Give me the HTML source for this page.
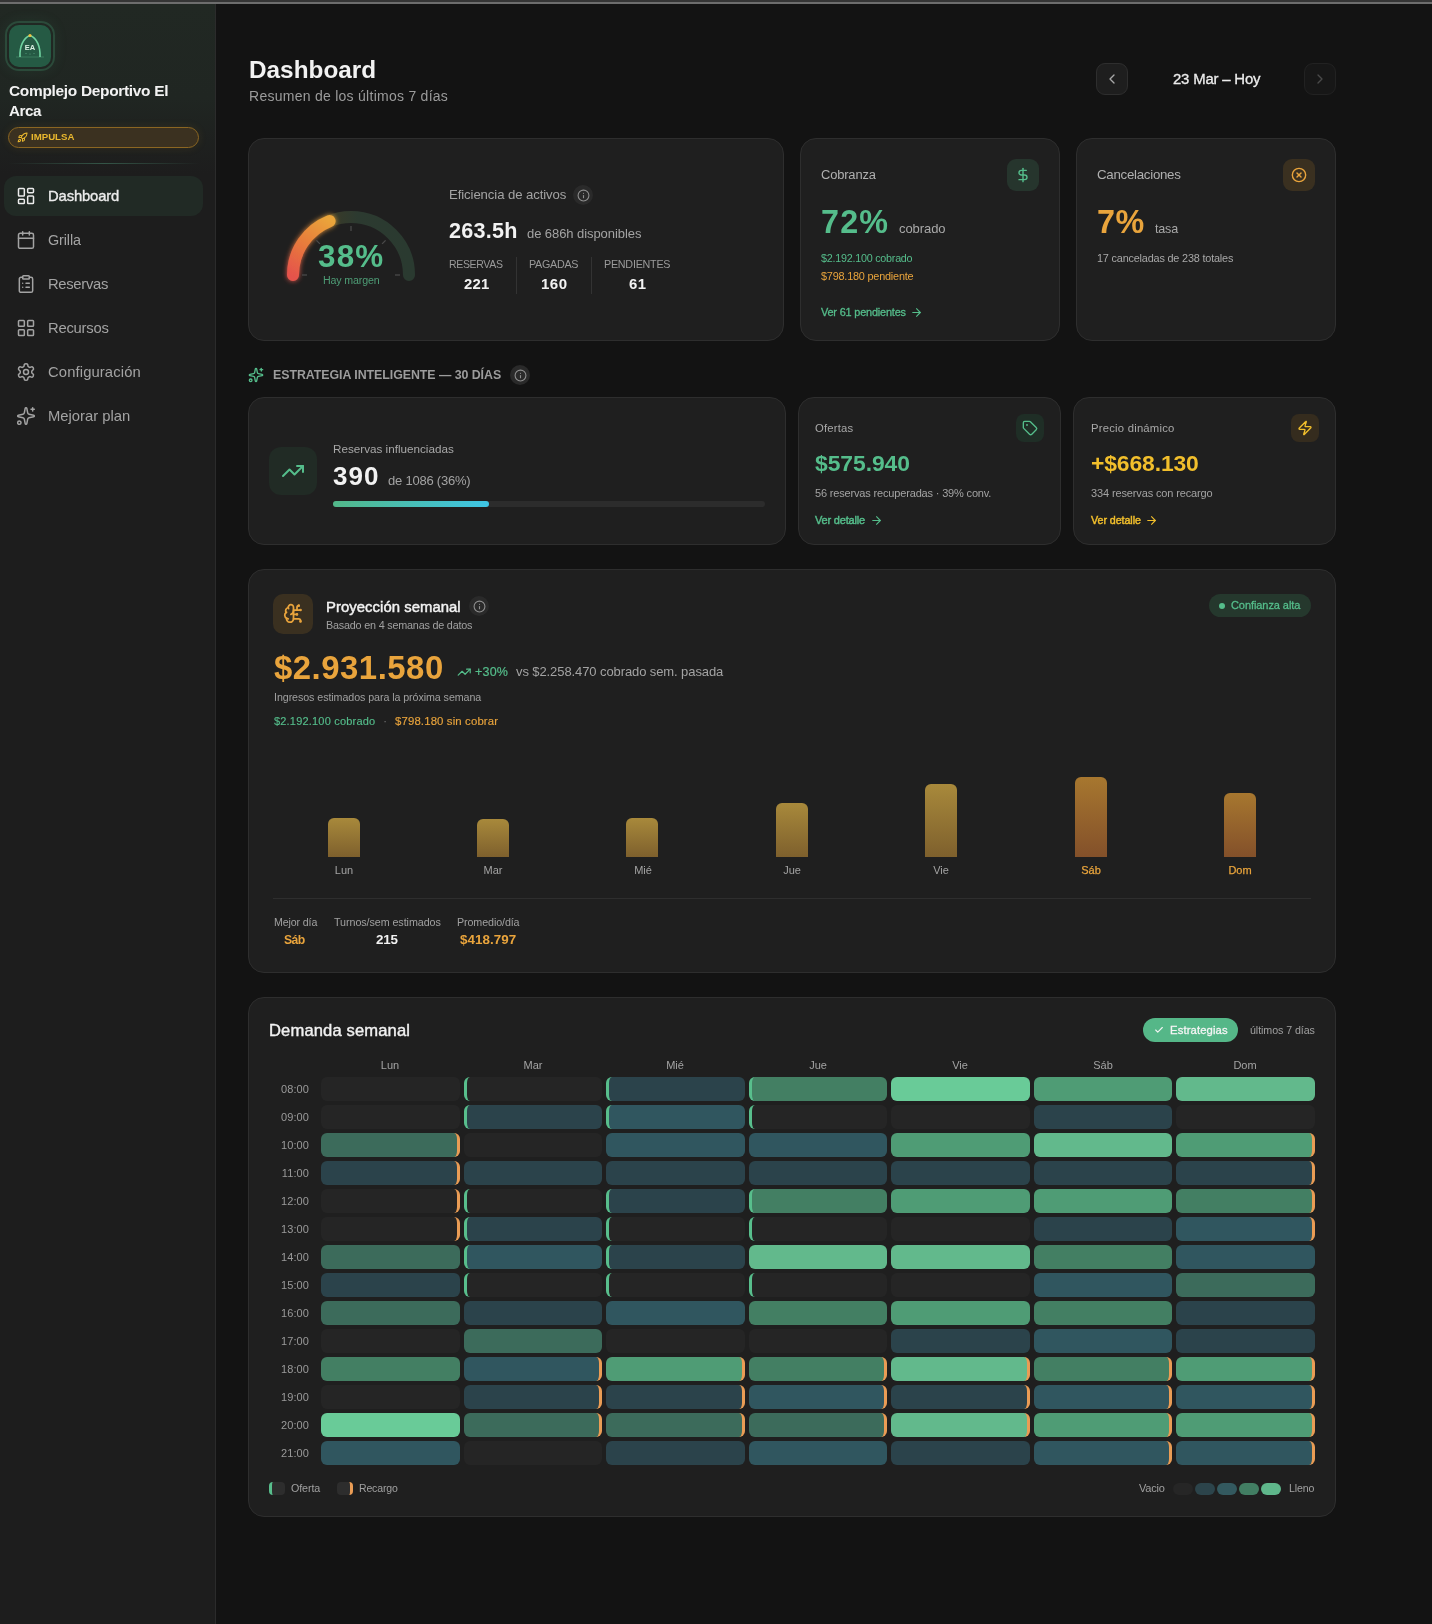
<!DOCTYPE html>
<html><head><meta charset="utf-8"><title>Dashboard</title>
<style>
html,body{margin:0;padding:0;}
body{width:1432px;height:1624px;background:#131313;position:relative;overflow:hidden;font-family:"Liberation Sans", sans-serif;}
.t{position:absolute;white-space:nowrap;-webkit-font-smoothing:antialiased;}
body>div.t{will-change:transform;}
.b{position:absolute;}
.ic{position:absolute;overflow:visible;}
</style></head><body>
<div class="b" style="left:0px;top:0px;width:1432px;height:2px;background:#353535;"></div>
<div class="b" style="left:0px;top:2px;width:1432px;height:2px;background:#6d6d6d;"></div>
<div class="b" style="left:0px;top:4px;width:215px;height:1620px;background:#1d1d1d;"></div>
<div class="b" style="left:0px;top:4px;width:215px;height:170px;background:linear-gradient(180deg,#212823 0%,#202622 55%,#1d1d1d 100%);"></div>
<div class="b" style="left:215px;top:4px;width:1px;height:1620px;background:#2b2b2b;"></div>
<div class="b" style="left:8px;top:163px;width:192px;height:1px;background:linear-gradient(90deg,rgba(60,110,90,0) 0%,rgba(70,130,105,.55) 50%,rgba(60,110,90,0) 100%);"></div>
<div class="b" style="left:5px;top:21px;width:50px;height:50px;border:2px solid #2b4a3a;border-radius:14px;box-sizing:border-box;box-shadow:0 0 14px rgba(70,170,120,.10);"></div>
<div class="b" style="left:9px;top:25px;width:42px;height:42px;background:#255a44;border-radius:10px;"></div>
<svg class="ic" style="left:9px;top:25px;will-change:transform" width="42" height="42" viewBox="0 0 42 42">
<line x1="7" y1="32" x2="35" y2="32" stroke="#3a7a5c" stroke-width="1"/>
<path d="M11 32 C10.5 22 14 13 21 10.5 C28 13 31.5 22 31 32" fill="none" stroke="#6fd3a0" stroke-width="1.6"/>
<circle cx="21" cy="10.5" r="1.6" fill="#f0c040"/>
<text x="21" y="25" text-anchor="middle" font-family="Liberation Sans" font-weight="700" font-size="7.5" fill="#d9efe2">EA</text>
<circle cx="17" cy="28.5" r=".5" fill="#5fae88"/><circle cx="21" cy="29" r=".5" fill="#5fae88"/><circle cx="25" cy="28.5" r=".5" fill="#5fae88"/>
</svg>
<div class="t" style="left:8.8px;top:83.00px;font-size:15.46px;line-height:15.46px;color:#f2f2f2;font-weight:700;letter-spacing:-0.312px;">Complejo Deportivo El</div>
<div class="t" style="left:8.8px;top:103.00px;font-size:15.24px;line-height:15.24px;color:#f2f2f2;font-weight:700;letter-spacing:-0.5px;">Arca</div>
<div class="b" style="left:8px;top:127px;width:191px;height:21px;background:#3b3120;border:1px solid #8b6622;border-radius:11px;box-sizing:border-box;box-shadow:0 0 10px rgba(200,150,40,.12);"></div>
<svg class="ic" style="left:17px;top:131.5px;" width="11" height="11" viewBox="0 0 24 24" fill="none" stroke="#e9b72e" stroke-width="2.2" stroke-linecap="round" stroke-linejoin="round"><path d="M4.5 16.5c-1.5 1.26-2 5-2 5s3.74-.5 5-2c.71-.84.7-2.13-.09-2.91a2.18 2.18 0 0 0-2.91-.09z"/><path d="m12 15-3-3a22 22 0 0 1 2-3.950A12.88 12.88 0 0 1 22 2c0 2.720-.78 7.5-6 11a22.35 22.35 0 0 1-4 2z"/><path d="M9 12H4s.55-3.03 2-4c1.62-1.08 5 0 5 0"/><path d="M12 15v5s3.03-.55 4-2c1.08-1.62 0-5 0-5"/></svg>
<div class="t" style="left:30.8px;top:132.00px;font-size:9.7px;line-height:9.7px;color:#e9b72e;font-weight:700;letter-spacing:-0.025px;">IMPULSA</div>
<div class="b" style="left:4px;top:176px;width:199px;height:40px;background:#212a25;border-radius:12px;"></div>
<svg class="ic" style="left:16px;top:186px;" width="20" height="20" viewBox="0 0 24 24" fill="none" stroke="#ececec" stroke-width="1.8" stroke-linecap="round" stroke-linejoin="round"><rect width="7" height="9" x="3" y="3" rx="1"/><rect width="7" height="5" x="14" y="3" rx="1"/><rect width="7" height="9" x="14" y="12" rx="1"/><rect width="7" height="5" x="3" y="16" rx="1"/></svg>
<div class="t" style="left:48.3px;top:189.00px;font-size:14.8px;line-height:14.8px;color:#ececec;font-weight:400;letter-spacing:-0.131px;-webkit-text-stroke:0.35px #ececec;">Dashboard</div>
<svg class="ic" style="left:16px;top:230px;" width="20" height="20" viewBox="0 0 24 24" fill="none" stroke="#a3a3a3" stroke-width="1.8" stroke-linecap="round" stroke-linejoin="round"><path d="M8 2v4"/><path d="M16 2v4"/><rect width="18" height="18" x="3" y="4" rx="2"/><path d="M3 10h18"/></svg>
<div class="t" style="left:48.3px;top:233.00px;font-size:14.42px;line-height:14.42px;color:#a3a3a3;font-weight:400;letter-spacing:-0.11px;">Grilla</div>
<svg class="ic" style="left:16px;top:274px;" width="20" height="20" viewBox="0 0 24 24" fill="none" stroke="#a3a3a3" stroke-width="1.8" stroke-linecap="round" stroke-linejoin="round"><rect width="8" height="4" x="8" y="2" rx="1" ry="1"/><path d="M16 4h2a2 2 0 0 1 2 2v14a2 2 0 0 1-2 2H6a2 2 0 0 1-2-2V6a2 2 0 0 1 2-2h2"/><path d="M12 11h4"/><path d="M12 16h4"/><path d="M8 11h.01"/><path d="M8 16h.01"/></svg>
<div class="t" style="left:48.3px;top:277.00px;font-size:14.8px;line-height:14.8px;color:#a3a3a3;font-weight:400;letter-spacing:-0.314px;">Reservas</div>
<svg class="ic" style="left:16px;top:318px;" width="20" height="20" viewBox="0 0 24 24" fill="none" stroke="#a3a3a3" stroke-width="1.8" stroke-linecap="round" stroke-linejoin="round"><rect width="7" height="7" x="3" y="3" rx="1"/><rect width="7" height="7" x="14" y="3" rx="1"/><rect width="7" height="7" x="14" y="14" rx="1"/><rect width="7" height="7" x="3" y="14" rx="1"/></svg>
<div class="t" style="left:48.3px;top:321.00px;font-size:14.8px;line-height:14.8px;color:#a3a3a3;font-weight:400;letter-spacing:-0.243px;">Recursos</div>
<svg class="ic" style="left:16px;top:362px;" width="20" height="20" viewBox="0 0 24 24" fill="none" stroke="#a3a3a3" stroke-width="1.8" stroke-linecap="round" stroke-linejoin="round"><path d="M12.22 2h-.44a2 2 0 0 0-2 2v.18a2 2 0 0 1-1 1.73l-.43.25a2 2 0 0 1-2 0l-.15-.08a2 2 0 0 0-2.73.73l-.22.38a2 2 0 0 0 .73 2.73l.15.1a2 2 0 0 1 1 1.72v.51a2 2 0 0 1-1 1.74l-.15.09a2 2 0 0 0-.73 2.73l.22.38a2 2 0 0 0 2.73.73l.15-.08a2 2 0 0 1 2 0l.43.25a2 2 0 0 1 1 1.73V20a2 2 0 0 0 2 2h.44a2 2 0 0 0 2-2v-.18a2 2 0 0 1 1-1.73l.43-.25a2 2 0 0 1 2 0l.15.08a2 2 0 0 0 2.73-.73l.22-.39a2 2 0 0 0-.73-2.730l-.15-.08a2 2 0 0 1-1-1.74v-.5a2 2 0 0 1 1-1.74l.15-.09a2 2 0 0 0 .73-2.73l-.22-.38a2 2 0 0 0-2.73-.73l-.15.08a2 2 0 0 1-2 0l-.43-.25a2 2 0 0 1-1-1.73V4a2 2 0 0 0-2-2z"/><circle cx="12" cy="12" r="3"/></svg>
<div class="t" style="left:48.3px;top:365.00px;font-size:14.8px;line-height:14.8px;color:#a3a3a3;font-weight:400;letter-spacing:0.117px;">Configuración</div>
<svg class="ic" style="left:16px;top:406px;" width="20" height="20" viewBox="0 0 24 24" fill="none" stroke="#a3a3a3" stroke-width="1.8" stroke-linecap="round" stroke-linejoin="round"><path d="M11.017 2.814a1 1 0 0 1 1.966 0l1.051 5.558a2 2 0 0 0 1.594 1.594l5.558 1.051a1 1 0 0 1 0 1.966l-5.558 1.051a2 2 0 0 0-1.594 1.594l-1.051 5.558a1 1 0 0 1-1.966 0l-1.051-5.558a2 2 0 0 0-1.594-1.594l-5.558-1.051a1 1 0 0 1 0-1.966l5.558-1.051a2 2 0 0 0 1.594-1.594z"/><path d="M20 2v4"/><path d="M22 4h-4"/><circle cx="4" cy="20" r="2"/></svg>
<div class="t" style="left:48.3px;top:409.00px;font-size:14.8px;line-height:14.8px;color:#a3a3a3;font-weight:400;letter-spacing:-0.005px;">Mejorar plan</div>
<div class="t" style="left:248.9px;top:58.00px;font-size:24.3px;line-height:24.3px;color:#f2f2f2;font-weight:700;letter-spacing:0.025px;">Dashboard</div>
<div class="t" style="left:248.5px;top:89.00px;font-size:14px;line-height:14px;color:#9b9b9b;font-weight:400;letter-spacing:0.266px;">Resumen de los últimos 7 días</div>
<div class="b" style="left:1096px;top:63px;width:32px;height:32px;background:#1e1e1e;border:1px solid #2e2e2e;border-radius:9px;box-sizing:border-box;"></div>
<svg class="ic" style="left:1104px;top:71px;" width="16" height="16" viewBox="0 0 24 24" fill="none" stroke="#a8a8a8" stroke-width="2" stroke-linecap="round" stroke-linejoin="round"><path d="m15 18-6-6 6-6"/></svg>
<div class="t" style="left:1172.5px;top:72.00px;font-size:14.93px;line-height:14.93px;color:#ececec;font-weight:400;letter-spacing:-0.186px;-webkit-text-stroke:0.3px #ececec;">23 Mar – Hoy</div>
<div class="b" style="left:1304px;top:63px;width:32px;height:32px;background:#171717;border:1px solid #222;border-radius:9px;box-sizing:border-box;"></div>
<svg class="ic" style="left:1312px;top:71px;" width="16" height="16" viewBox="0 0 24 24" fill="none" stroke="#4a4a4a" stroke-width="2" stroke-linecap="round" stroke-linejoin="round"><path d="m9 18 6-6-6-6"/></svg>
<div class="b" style="left:248px;top:138px;width:536px;height:203px;background:#1f1f1f;border:1px solid #2e2e2e;border-radius:16px;box-sizing:border-box;"></div>
<div class="b" style="left:800px;top:138px;width:260px;height:203px;background:#1f1f1f;border:1px solid #2e2e2e;border-radius:16px;box-sizing:border-box;"></div>
<div class="b" style="left:1076px;top:138px;width:260px;height:203px;background:#1f1f1f;border:1px solid #2e2e2e;border-radius:16px;box-sizing:border-box;"></div>
<svg class="ic" style="left:268px;top:195px" width="166" height="105" viewBox="268 195 166 105">
<defs>
<linearGradient id="gtr" x1="330" y1="0" x2="409" y2="0" gradientUnits="userSpaceOnUse"><stop offset="0" stop-color="#3a3a28"/><stop offset=".35" stop-color="#2c3a30"/><stop offset="1" stop-color="#2a3a30"/></linearGradient>
<linearGradient id="gac" x1="293" y1="276" x2="330" y2="220" gradientUnits="userSpaceOnUse"><stop offset="0" stop-color="#e5534b"/><stop offset=".55" stop-color="#e8803a"/><stop offset="1" stop-color="#eaa53a"/></linearGradient>
<filter id="glow" x="-30%" y="-30%" width="160%" height="160%"><feGaussianBlur stdDeviation="2.5" result="b"/><feMerge><feMergeNode in="b"/><feMergeNode in="SourceGraphic"/></feMerge></filter>
</defs>
<path d="M293 275 A58 58 0 0 1 409 275" fill="none" stroke="url(#gtr)" stroke-width="12" stroke-linecap="round"/>
<path d="M293 275 A58 58 0 0 1 329.6 221.1" fill="none" stroke="url(#gac)" stroke-width="12" stroke-linecap="round" filter="url(#glow)"/>
<g stroke="#4a4a4a" stroke-width="1.3">
<line x1="302" y1="275" x2="307" y2="275"/><line x1="395" y1="275" x2="400" y2="275"/>
<line x1="351" y1="226" x2="351" y2="231"/>
<line x1="316.4" y1="240.4" x2="319.9" y2="243.9"/><line x1="385.6" y1="240.4" x2="382.1" y2="243.9"/>
</g>
</svg>
<div class="t" style="left:317.8px;top:241.00px;font-size:31.4px;line-height:31.4px;color:#55bd8b;font-weight:700;letter-spacing:1.225px;">38%</div>
<div class="t" style="left:322.5px;top:275.00px;font-size:10.65px;line-height:10.65px;color:#4e9d76;font-weight:400;letter-spacing:-0.133px;">Hay margen</div>
<div class="t" style="left:449.2px;top:188.00px;font-size:13.17px;line-height:13.17px;color:#a3a3a3;font-weight:400;letter-spacing:-0.093px;">Eficiencia de activos</div>
<div class="b" style="left:573px;top:185px;width:20px;height:20px;background:#2a2a2a;border-radius:50%;"></div>
<svg class="ic" style="left:576.5px;top:188.5px;" width="13" height="13" viewBox="0 0 24 24" fill="none" stroke="#8f8f8f" stroke-width="2" stroke-linecap="round" stroke-linejoin="round"><circle cx="12" cy="12" r="10"/><path d="M12 16v-4"/><path d="M12 8h.01"/></svg>
<div class="t" style="left:449.0px;top:220.00px;font-size:21.57px;line-height:21.57px;color:#f2f2f2;font-weight:700;letter-spacing:0.26px;">263.5h</div>
<div class="t" style="left:526.6px;top:227.00px;font-size:13px;line-height:13px;color:#a3a3a3;font-weight:400;letter-spacing:-0.069px;">de 686h disponibles</div>
<div class="t" style="left:449.0px;top:259.00px;font-size:10.53px;line-height:10.53px;color:#9a9a9a;font-weight:400;letter-spacing:-0.343px;">RESERVAS</div>
<div class="t" style="left:463.5px;top:277.00px;font-size:14.85px;line-height:14.85px;color:#f2f2f2;font-weight:700;letter-spacing:0.3px;">221</div>
<div class="b" style="left:516px;top:257px;width:1px;height:37px;background:#333;"></div>
<div class="t" style="left:528.8px;top:259.00px;font-size:10.75px;line-height:10.75px;color:#9a9a9a;font-weight:400;letter-spacing:-0.283px;">PAGADAS</div>
<div class="t" style="left:541.0px;top:276.00px;font-size:15.06px;line-height:15.06px;color:#f2f2f2;font-weight:700;letter-spacing:0.45px;">160</div>
<div class="b" style="left:591px;top:257px;width:1px;height:37px;background:#333;"></div>
<div class="t" style="left:603.9px;top:259.00px;font-size:10.76px;line-height:10.76px;color:#9a9a9a;font-weight:400;letter-spacing:-0.244px;">PENDIENTES</div>
<div class="t" style="left:628.5px;top:277.00px;font-size:14.89px;line-height:14.89px;color:#f2f2f2;font-weight:700;letter-spacing:0.5px;">61</div>
<div class="t" style="left:821.4px;top:169.00px;font-size:12.92px;line-height:12.92px;color:#b0b0b0;font-weight:400;letter-spacing:-0.15px;">Cobranza</div>
<div class="b" style="left:1007px;top:159px;width:32px;height:32px;background:#26352d;border-radius:9px;"></div>
<svg class="ic" style="left:1015px;top:167px;" width="16" height="16" viewBox="0 0 24 24" fill="none" stroke="#55bd8b" stroke-width="2.1" stroke-linecap="round" stroke-linejoin="round"><line x1="12" x2="12" y1="2" y2="22"/><path d="M17 5H9.5a3.5 3.5 0 0 0 0 7h5a3.5 3.5 0 0 1 0 7H6"/></svg>
<div class="t" style="left:821.0px;top:206.00px;font-size:32.3px;line-height:32.3px;color:#55bd8b;font-weight:700;letter-spacing:1.175px;">72%</div>
<div class="t" style="left:898.6px;top:222.00px;font-size:13px;line-height:13px;color:#a8a8a8;font-weight:400;letter-spacing:-0.067px;">cobrado</div>
<div class="t" style="left:821.0px;top:253.00px;font-size:10.76px;line-height:10.76px;color:#55bd8b;font-weight:400;letter-spacing:-0.238px;">$2.192.100 cobrado</div>
<div class="t" style="left:821.0px;top:271.00px;font-size:10.86px;line-height:10.86px;color:#e9a43c;font-weight:400;letter-spacing:-0.203px;">$798.180 pendiente</div>
<div class="t" style="left:821.0px;top:307.00px;font-size:10.91px;line-height:10.91px;color:#55bd8b;font-weight:400;letter-spacing:-0.184px;-webkit-text-stroke:0.3px #55bd8b;">Ver 61 pendientes</div>
<svg class="ic" style="left:909.5px;top:305.5px;" width="13" height="13" viewBox="0 0 24 24" fill="none" stroke="#55bd8b" stroke-width="2" stroke-linecap="round" stroke-linejoin="round"><path d="M5 12h14"/><path d="m12 5 7 7-7 7"/></svg>
<div class="t" style="left:1097.4px;top:168.00px;font-size:13.3px;line-height:13.3px;color:#b0b0b0;font-weight:400;letter-spacing:-0.279px;">Cancelaciones</div>
<div class="b" style="left:1283px;top:159px;width:32px;height:32px;background:#3a3020;border-radius:9px;"></div>
<svg class="ic" style="left:1291px;top:167px;" width="16" height="16" viewBox="0 0 24 24" fill="none" stroke="#e9a43c" stroke-width="2.1" stroke-linecap="round" stroke-linejoin="round"><circle cx="12" cy="12" r="10"/><path d="m15 9-6 6"/><path d="m9 9 6 6"/></svg>
<div class="t" style="left:1097.4px;top:206.00px;font-size:32.3px;line-height:32.3px;color:#e9a43c;font-weight:700;letter-spacing:0.5px;">7%</div>
<div class="t" style="left:1155.0px;top:223.00px;font-size:12.55px;line-height:12.55px;color:#a8a8a8;font-weight:400;letter-spacing:-0.183px;">tasa</div>
<div class="t" style="left:1097.4px;top:253.00px;font-size:10.87px;line-height:10.87px;color:#a8a8a8;font-weight:400;letter-spacing:-0.183px;">17 canceladas de 238 totales</div>
<svg class="ic" style="left:248px;top:367px;" width="16" height="16" viewBox="0 0 24 24" fill="none" stroke="#55bd8b" stroke-width="2" stroke-linecap="round" stroke-linejoin="round"><path d="M11.017 2.814a1 1 0 0 1 1.966 0l1.051 5.558a2 2 0 0 0 1.594 1.594l5.558 1.051a1 1 0 0 1 0 1.966l-5.558 1.051a2 2 0 0 0-1.594 1.594l-1.051 5.558a1 1 0 0 1-1.966 0l-1.051-5.558a2 2 0 0 0-1.594-1.594l-5.558-1.051a1 1 0 0 1 0-1.966l5.558-1.051a2 2 0 0 0 1.594-1.594z"/><path d="M20 2v4"/><path d="M22 4h-4"/><circle cx="4" cy="20" r="2"/></svg>
<div class="t" style="left:272.5px;top:369.00px;font-size:12.4px;line-height:12.4px;color:#9c9c9c;font-weight:700;letter-spacing:-0.058px;">ESTRATEGIA INTELIGENTE — 30 DÍAS</div>
<div class="b" style="left:510px;top:365px;width:20px;height:20px;background:#2a2a2a;border-radius:50%;"></div>
<svg class="ic" style="left:513.5px;top:368.5px;" width="13" height="13" viewBox="0 0 24 24" fill="none" stroke="#8f8f8f" stroke-width="2" stroke-linecap="round" stroke-linejoin="round"><circle cx="12" cy="12" r="10"/><path d="M12 16v-4"/><path d="M12 8h.01"/></svg>
<div class="b" style="left:248px;top:397px;width:538px;height:148px;background:#1f1f1f;border:1px solid #2e2e2e;border-radius:16px;box-sizing:border-box;"></div>
<div class="b" style="left:798px;top:397px;width:263px;height:148px;background:#1f1f1f;border:1px solid #2e2e2e;border-radius:16px;box-sizing:border-box;"></div>
<div class="b" style="left:1073px;top:397px;width:263px;height:148px;background:#1f1f1f;border:1px solid #2e2e2e;border-radius:16px;box-sizing:border-box;"></div>
<div class="b" style="left:269px;top:447px;width:48px;height:48px;background:#212b25;border-radius:12px;"></div>
<svg class="ic" style="left:281px;top:459px;" width="24" height="24" viewBox="0 0 24 24" fill="none" stroke="#55bd8b" stroke-width="2" stroke-linecap="round" stroke-linejoin="round"><path d="M16 7h6v6"/><path d="m22 7-8.5 8.5-5-5L2 17"/></svg>
<div class="t" style="left:333.4px;top:443.00px;font-size:11.7px;line-height:11.7px;color:#a8a8a8;font-weight:400;letter-spacing:-0.002px;">Reservas influenciadas</div>
<div class="t" style="left:333.4px;top:463.00px;font-size:26.0px;line-height:26.0px;color:#f2f2f2;font-weight:700;letter-spacing:1.0px;">390</div>
<div class="t" style="left:387.6px;top:474.00px;font-size:13px;line-height:13px;color:#a3a3a3;font-weight:400;letter-spacing:-0.217px;">de 1086 (36%)</div>
<div class="b" style="left:333px;top:501px;width:432px;height:6px;background:#2c2c2c;border-radius:3px;"></div>
<div class="b" style="left:333px;top:501px;width:156px;height:6px;background:linear-gradient(90deg,#52b788,#3ec6e6);border-radius:3px;"></div>
<div class="t" style="left:815.4px;top:423.00px;font-size:11.3px;line-height:11.3px;color:#a8a8a8;font-weight:400;letter-spacing:0.192px;">Ofertas</div>
<div class="b" style="left:1016px;top:414px;width:28px;height:28px;background:#1f2e26;border-radius:8px;"></div>
<svg class="ic" style="left:1022.3px;top:420.3px;" width="16" height="16" viewBox="0 0 24 24" fill="none" stroke="#55bd8b" stroke-width="2" stroke-linecap="round" stroke-linejoin="round"><path d="M12.586 2.586A2 2 0 0 0 11.172 2H4a2 2 0 0 0-2 2v7.172a2 2 0 0 0 .586 1.414l8.704 8.704a2.426 2.426 0 0 0 3.42 0l6.58-6.58a2.426 2.426 0 0 0 0-3.42z"/><circle cx="7.5" cy="7.5" r=".5" fill="currentColor"/></svg>
<div class="t" style="left:815.4px;top:452.00px;font-size:22.9px;line-height:22.9px;color:#55bd8b;font-weight:700;letter-spacing:-0.071px;">$575.940</div>
<div class="t" style="left:815.4px;top:488.00px;font-size:11px;line-height:11px;color:#a3a3a3;font-weight:400;letter-spacing:-0.165px;">56 reservas recuperadas · 39% conv.</div>
<div class="t" style="left:815.4px;top:515.00px;font-size:11px;line-height:11px;color:#55bd8b;font-weight:400;letter-spacing:-0.185px;-webkit-text-stroke:0.45px #55bd8b;">Ver detalle</div>
<svg class="ic" style="left:869.6px;top:514.2px;" width="13" height="13" viewBox="0 0 24 24" fill="none" stroke="#55bd8b" stroke-width="2" stroke-linecap="round" stroke-linejoin="round"><path d="M5 12h14"/><path d="m12 5 7 7-7 7"/></svg>
<div class="t" style="left:1090.5px;top:423.00px;font-size:11.3px;line-height:11.3px;color:#a8a8a8;font-weight:400;letter-spacing:0.214px;">Precio dinámico</div>
<div class="b" style="left:1291px;top:414px;width:28px;height:28px;background:#352c1e;border-radius:8px;"></div>
<svg class="ic" style="left:1297px;top:420.3px;" width="16" height="16" viewBox="0 0 24 24" fill="none" stroke="#f2bf2c" stroke-width="2" stroke-linecap="round" stroke-linejoin="round"><path d="M4 14a1 1 0 0 1-.78-1.63l9.9-10.2a.5.5 0 0 1 .86.46l-1.92 6.02A1 1 0 0 0 13 10h7a1 1 0 0 1 .78 1.63l-9.9 10.2a.5.5 0 0 1-.86-.46l1.92-6.02A1 1 0 0 0 11 14z"/></svg>
<div class="t" style="left:1090.5px;top:452.00px;font-size:22.9px;line-height:22.9px;color:#f2bf2c;font-weight:700;letter-spacing:-0.125px;">+$668.130</div>
<div class="t" style="left:1090.5px;top:488.00px;font-size:11px;line-height:11px;color:#a3a3a3;font-weight:400;letter-spacing:-0.133px;">334 reservas con recargo</div>
<div class="t" style="left:1090.5px;top:515.00px;font-size:10.72px;line-height:10.72px;color:#f2bf2c;font-weight:400;letter-spacing:-0.07px;-webkit-text-stroke:0.45px #f2bf2c;">Ver detalle</div>
<svg class="ic" style="left:1144.7px;top:514.4px;" width="13" height="13" viewBox="0 0 24 24" fill="none" stroke="#f2bf2c" stroke-width="2" stroke-linecap="round" stroke-linejoin="round"><path d="M5 12h14"/><path d="m12 5 7 7-7 7"/></svg>
<div class="b" style="left:248px;top:569px;width:1088px;height:404px;background:#1f1f1f;border:1px solid #2e2e2e;border-radius:16px;box-sizing:border-box;"></div>
<div class="b" style="left:273px;top:594px;width:40px;height:40px;background:#3a3020;border-radius:10px;"></div>
<svg class="ic" style="left:282.7px;top:602.9px;" width="21" height="21" viewBox="0 0 24 24" fill="none" stroke="#e9a43c" stroke-width="2" stroke-linecap="round" stroke-linejoin="round"><path d="M12 5a3 3 0 1 0-5.997.125 4 4 0 0 0-2.526 5.77 4 4 0 0 0 .556 6.588A4 4 0 1 0 12 18Z"/><path d="M9 13a4.5 4.5 0 0 0 3-4"/><path d="M6.003 5.125A3 3 0 0 0 6.401 6.5"/><path d="M3.477 10.896a4 4 0 0 1 .585-.396"/><path d="M6 18a4 4 0 0 1-1.967-.516"/><path d="M12 13h4"/><path d="M12 18h6a2 2 0 0 1 2 2v1"/><path d="M12 8h8"/><path d="M16 8V5a2 2 0 0 1 2-2"/><circle cx="16" cy="13" r=".5"/><circle cx="18" cy="3" r=".5"/><circle cx="20" cy="21" r=".5"/><circle cx="20" cy="8" r=".5"/></svg>
<div class="t" style="left:325.5px;top:600.00px;font-size:14.9px;line-height:14.9px;color:#f2f2f2;font-weight:400;letter-spacing:0.035px;-webkit-text-stroke:0.45px #f2f2f2;">Proyección semanal</div>
<div class="b" style="left:469px;top:596px;width:20px;height:20px;background:#2a2a2a;border-radius:50%;"></div>
<svg class="ic" style="left:472.5px;top:599.5px;" width="13" height="13" viewBox="0 0 24 24" fill="none" stroke="#8f8f8f" stroke-width="2" stroke-linecap="round" stroke-linejoin="round"><circle cx="12" cy="12" r="10"/><path d="M12 16v-4"/><path d="M12 8h.01"/></svg>
<div class="t" style="left:325.5px;top:620.00px;font-size:10.8px;line-height:10.8px;color:#a0a0a0;font-weight:400;letter-spacing:-0.2px;">Basado en 4 semanas de datos</div>
<div class="b" style="left:1209px;top:594px;width:102px;height:23px;background:#25382d;border-radius:12px;"></div>
<div class="b" style="left:1219px;top:602.5px;width:6px;height:6px;background:#55bd8b;border-radius:50%;"></div>
<div class="t" style="left:1231.0px;top:600.00px;font-size:11px;line-height:11px;color:#55bd8b;font-weight:400;letter-spacing:-0.073px;-webkit-text-stroke:0.3px #55bd8b;">Confianza alta</div>
<div class="t" style="left:273.7px;top:652.00px;font-size:32.9px;line-height:32.9px;color:#e9a43c;font-weight:700;letter-spacing:0.506px;">$2.931.580</div>
<svg class="ic" style="left:457.2px;top:664.6px;" width="14.4" height="14.4" viewBox="0 0 24 24" fill="none" stroke="#55bd8b" stroke-width="2" stroke-linecap="round" stroke-linejoin="round"><path d="M16 7h6v6"/><path d="m22 7-8.5 8.5-5-5L2 17"/></svg>
<div class="t" style="left:475.2px;top:666.00px;font-size:12.5px;line-height:12.5px;color:#55bd8b;font-weight:400;letter-spacing:0.2px;-webkit-text-stroke:0.2px #55bd8b;">+30%</div>
<div class="t" style="left:515.7px;top:665.00px;font-size:13px;line-height:13px;color:#a3a3a3;font-weight:400;letter-spacing:-0.094px;">vs $2.258.470 cobrado sem. pasada</div>
<div class="t" style="left:273.5px;top:692.00px;font-size:10.69px;line-height:10.69px;color:#a0a0a0;font-weight:400;letter-spacing:-0.076px;">Ingresos estimados para la próxima semana</div>
<div class="t" style="left:273.5px;top:716.00px;font-size:11px;line-height:11px;color:#55bd8b;font-weight:400;letter-spacing:0.194px;-webkit-text-stroke:0.15px #55bd8b;">$2.192.100 cobrado</div>
<div class="t" style="left:380.00px;top:716.00px;font-size:11px;line-height:11px;color:#777;font-weight:400;width:10px;text-align:center;">·</div>
<div class="t" style="left:394.8px;top:716.00px;font-size:11.38px;line-height:11.38px;color:#e9a43c;font-weight:400;letter-spacing:0.139px;-webkit-text-stroke:0.15px #e9a43c;">$798.180 sin cobrar</div>
<div class="b" style="left:328px;top:818px;width:32px;height:39px;background:linear-gradient(180deg,#a8893b,#7e602d);border-radius:6px 6px 0 0;"></div>
<div class="t" style="left:313.70px;top:865.00px;font-size:11px;line-height:11px;color:#a3a3a3;font-weight:400;width:60px;text-align:center;">Lun</div>
<div class="b" style="left:477px;top:819px;width:32px;height:38px;background:linear-gradient(180deg,#a8893b,#7e602d);border-radius:6px 6px 0 0;"></div>
<div class="t" style="left:463.10px;top:865.00px;font-size:11px;line-height:11px;color:#a3a3a3;font-weight:400;width:60px;text-align:center;">Mar</div>
<div class="b" style="left:626px;top:818px;width:32px;height:39px;background:linear-gradient(180deg,#a8893b,#7e602d);border-radius:6px 6px 0 0;"></div>
<div class="t" style="left:612.50px;top:865.00px;font-size:11px;line-height:11px;color:#a3a3a3;font-weight:400;width:60px;text-align:center;">Mié</div>
<div class="b" style="left:776px;top:803px;width:32px;height:54px;background:linear-gradient(180deg,#a8893b,#7e602d);border-radius:6px 6px 0 0;"></div>
<div class="t" style="left:761.90px;top:865.00px;font-size:11px;line-height:11px;color:#a3a3a3;font-weight:400;width:60px;text-align:center;">Jue</div>
<div class="b" style="left:925px;top:784px;width:32px;height:73px;background:linear-gradient(180deg,#a8893b,#7e602d);border-radius:6px 6px 0 0;"></div>
<div class="t" style="left:911.30px;top:865.00px;font-size:11px;line-height:11px;color:#a3a3a3;font-weight:400;width:60px;text-align:center;">Vie</div>
<div class="b" style="left:1075px;top:777px;width:32px;height:80px;background:linear-gradient(180deg,#a7772f,#83502a);border-radius:6px 6px 0 0;"></div>
<div class="t" style="left:1060.70px;top:865.00px;font-size:11px;line-height:11px;color:#e9a43c;font-weight:400;width:60px;text-align:center;-webkit-text-stroke:0.25px #e9a43c;">Sáb</div>
<div class="b" style="left:1224px;top:793px;width:32px;height:64px;background:linear-gradient(180deg,#a7772f,#83502a);border-radius:6px 6px 0 0;"></div>
<div class="t" style="left:1210.10px;top:865.00px;font-size:11px;line-height:11px;color:#e9a43c;font-weight:400;width:60px;text-align:center;-webkit-text-stroke:0.25px #e9a43c;">Dom</div>
<div class="b" style="left:273px;top:898px;width:1038px;height:1px;background:#2e2e2e;"></div>
<div class="t" style="left:273.5px;top:917.00px;font-size:10.62px;line-height:10.62px;color:#a0a0a0;font-weight:400;letter-spacing:-0.113px;">Mejor día</div>
<div class="t" style="left:284.4px;top:934.00px;font-size:12.22px;line-height:12.22px;color:#e9a43c;font-weight:700;letter-spacing:-0.65px;">Sáb</div>
<div class="t" style="left:333.8px;top:917.00px;font-size:10.74px;line-height:10.74px;color:#a0a0a0;font-weight:400;letter-spacing:-0.071px;">Turnos/sem estimados</div>
<div class="t" style="left:375.9px;top:933.00px;font-size:13.4px;line-height:13.4px;color:#f2f2f2;font-weight:700;letter-spacing:-0.175px;">215</div>
<div class="t" style="left:456.9px;top:917.00px;font-size:10.71px;line-height:10.71px;color:#a0a0a0;font-weight:400;letter-spacing:-0.1px;">Promedio/día</div>
<div class="t" style="left:459.6px;top:933.00px;font-size:13.4px;line-height:13.4px;color:#e9a43c;font-weight:700;letter-spacing:0.043px;">$418.797</div>
<div class="b" style="left:248px;top:997px;width:1088px;height:520px;background:#1f1f1f;border:1px solid #2e2e2e;border-radius:16px;box-sizing:border-box;"></div>
<div class="t" style="left:269.2px;top:1023.00px;font-size:16.6px;line-height:16.6px;color:#f2f2f2;font-weight:400;letter-spacing:0.118px;-webkit-text-stroke:0.4px #f2f2f2;">Demanda semanal</div>
<div class="b" style="left:1143px;top:1018px;width:95px;height:24px;background:#55b788;border-radius:12px;"></div>
<svg class="ic" style="left:1154px;top:1025px;" width="10" height="10" viewBox="0 0 24 24" fill="none" stroke="#f4f4f4" stroke-width="2.6" stroke-linecap="round" stroke-linejoin="round"><path d="M20 6 9 17l-5-5"/></svg>
<div class="t" style="left:1169.8px;top:1025.00px;font-size:11.31px;line-height:11.31px;color:#f4f4f4;font-weight:400;letter-spacing:0.115px;-webkit-text-stroke:0.3px #f4f4f4;">Estrategias</div>
<div class="t" style="left:1250.0px;top:1025.00px;font-size:10.69px;line-height:10.69px;color:#a0a0a0;font-weight:400;letter-spacing:-0.077px;">últimos 7 días</div>
<div class="t" style="left:350.25px;top:1060.00px;font-size:11px;line-height:11px;color:#a3a3a3;font-weight:400;width:80px;text-align:center;">Lun</div>
<div class="t" style="left:492.75px;top:1060.00px;font-size:11px;line-height:11px;color:#a3a3a3;font-weight:400;width:80px;text-align:center;">Mar</div>
<div class="t" style="left:635.25px;top:1060.00px;font-size:11px;line-height:11px;color:#a3a3a3;font-weight:400;width:80px;text-align:center;">Mié</div>
<div class="t" style="left:777.75px;top:1060.00px;font-size:11px;line-height:11px;color:#a3a3a3;font-weight:400;width:80px;text-align:center;">Jue</div>
<div class="t" style="left:920.25px;top:1060.00px;font-size:11px;line-height:11px;color:#a3a3a3;font-weight:400;width:80px;text-align:center;">Vie</div>
<div class="t" style="left:1062.75px;top:1060.00px;font-size:11px;line-height:11px;color:#a3a3a3;font-weight:400;width:80px;text-align:center;">Sáb</div>
<div class="t" style="left:1205.25px;top:1060.00px;font-size:11px;line-height:11px;color:#a3a3a3;font-weight:400;width:80px;text-align:center;">Dom</div>
<div class="t" style="left:248.50px;top:1084.00px;font-size:11px;line-height:11px;color:#9a9a9a;font-weight:400;letter-spacing:0.1px;width:60px;text-align:right;">08:00</div>
<div class="t" style="left:248.50px;top:1112.00px;font-size:11px;line-height:11px;color:#9a9a9a;font-weight:400;letter-spacing:0.1px;width:60px;text-align:right;">09:00</div>
<div class="t" style="left:248.50px;top:1140.00px;font-size:11px;line-height:11px;color:#9a9a9a;font-weight:400;letter-spacing:0.1px;width:60px;text-align:right;">10:00</div>
<div class="t" style="left:248.50px;top:1168.00px;font-size:11px;line-height:11px;color:#9a9a9a;font-weight:400;letter-spacing:0.1px;width:60px;text-align:right;">11:00</div>
<div class="t" style="left:248.50px;top:1196.00px;font-size:11px;line-height:11px;color:#9a9a9a;font-weight:400;letter-spacing:0.1px;width:60px;text-align:right;">12:00</div>
<div class="t" style="left:248.50px;top:1224.00px;font-size:11px;line-height:11px;color:#9a9a9a;font-weight:400;letter-spacing:0.1px;width:60px;text-align:right;">13:00</div>
<div class="t" style="left:248.50px;top:1252.00px;font-size:11px;line-height:11px;color:#9a9a9a;font-weight:400;letter-spacing:0.1px;width:60px;text-align:right;">14:00</div>
<div class="t" style="left:248.50px;top:1280.00px;font-size:11px;line-height:11px;color:#9a9a9a;font-weight:400;letter-spacing:0.1px;width:60px;text-align:right;">15:00</div>
<div class="t" style="left:248.50px;top:1308.00px;font-size:11px;line-height:11px;color:#9a9a9a;font-weight:400;letter-spacing:0.1px;width:60px;text-align:right;">16:00</div>
<div class="t" style="left:248.50px;top:1336.00px;font-size:11px;line-height:11px;color:#9a9a9a;font-weight:400;letter-spacing:0.1px;width:60px;text-align:right;">17:00</div>
<div class="t" style="left:248.50px;top:1364.00px;font-size:11px;line-height:11px;color:#9a9a9a;font-weight:400;letter-spacing:0.1px;width:60px;text-align:right;">18:00</div>
<div class="t" style="left:248.50px;top:1392.00px;font-size:11px;line-height:11px;color:#9a9a9a;font-weight:400;letter-spacing:0.1px;width:60px;text-align:right;">19:00</div>
<div class="t" style="left:248.50px;top:1420.00px;font-size:11px;line-height:11px;color:#9a9a9a;font-weight:400;letter-spacing:0.1px;width:60px;text-align:right;">20:00</div>
<div class="t" style="left:248.50px;top:1448.00px;font-size:11px;line-height:11px;color:#9a9a9a;font-weight:400;letter-spacing:0.1px;width:60px;text-align:right;">21:00</div>
<div class="b" style="left:321.0px;top:1077px;width:138.5px;height:24px;background:#252525;border-radius:6px;"></div>
<div class="b" style="left:321.0px;top:1105px;width:138.5px;height:24px;background:#252525;border-radius:6px;"></div>
<div class="b" style="left:321.0px;top:1133px;width:138.5px;height:24px;background:#3c6b5b;border-radius:6px;border-right:3px solid #e99c55;box-sizing:border-box;"></div>
<div class="b" style="left:321.0px;top:1161px;width:138.5px;height:24px;background:#2b434b;border-radius:6px;border-right:3px solid #e99c55;box-sizing:border-box;"></div>
<div class="b" style="left:321.0px;top:1189px;width:138.5px;height:24px;background:#252525;border-radius:6px;border-right:3px solid #e99c55;box-sizing:border-box;"></div>
<div class="b" style="left:321.0px;top:1217px;width:138.5px;height:24px;background:#252525;border-radius:6px;border-right:3px solid #e99c55;box-sizing:border-box;"></div>
<div class="b" style="left:321.0px;top:1245px;width:138.5px;height:24px;background:#3c6b5b;border-radius:6px;"></div>
<div class="b" style="left:321.0px;top:1273px;width:138.5px;height:24px;background:#2b434b;border-radius:6px;"></div>
<div class="b" style="left:321.0px;top:1301px;width:138.5px;height:24px;background:#3c6b5b;border-radius:6px;"></div>
<div class="b" style="left:321.0px;top:1329px;width:138.5px;height:24px;background:#252525;border-radius:6px;"></div>
<div class="b" style="left:321.0px;top:1357px;width:138.5px;height:24px;background:#437f63;border-radius:6px;"></div>
<div class="b" style="left:321.0px;top:1385px;width:138.5px;height:24px;background:#252525;border-radius:6px;"></div>
<div class="b" style="left:321.0px;top:1413px;width:138.5px;height:24px;background:#69cb98;border-radius:6px;"></div>
<div class="b" style="left:321.0px;top:1441px;width:138.5px;height:24px;background:#30565f;border-radius:6px;"></div>
<div class="b" style="left:463.5px;top:1077px;width:138.5px;height:24px;background:#252525;border-radius:6px;border-left:3px solid #58be8c;box-sizing:border-box;"></div>
<div class="b" style="left:463.5px;top:1105px;width:138.5px;height:24px;background:#2b434b;border-radius:6px;border-left:3px solid #58be8c;box-sizing:border-box;"></div>
<div class="b" style="left:463.5px;top:1133px;width:138.5px;height:24px;background:#252525;border-radius:6px;"></div>
<div class="b" style="left:463.5px;top:1161px;width:138.5px;height:24px;background:#2b434b;border-radius:6px;"></div>
<div class="b" style="left:463.5px;top:1189px;width:138.5px;height:24px;background:#252525;border-radius:6px;border-left:3px solid #58be8c;box-sizing:border-box;"></div>
<div class="b" style="left:463.5px;top:1217px;width:138.5px;height:24px;background:#2b434b;border-radius:6px;border-left:3px solid #58be8c;box-sizing:border-box;"></div>
<div class="b" style="left:463.5px;top:1245px;width:138.5px;height:24px;background:#30565f;border-radius:6px;border-left:3px solid #58be8c;box-sizing:border-box;"></div>
<div class="b" style="left:463.5px;top:1273px;width:138.5px;height:24px;background:#252525;border-radius:6px;border-left:3px solid #58be8c;box-sizing:border-box;"></div>
<div class="b" style="left:463.5px;top:1301px;width:138.5px;height:24px;background:#2b434b;border-radius:6px;"></div>
<div class="b" style="left:463.5px;top:1329px;width:138.5px;height:24px;background:#3c6b5b;border-radius:6px;"></div>
<div class="b" style="left:463.5px;top:1357px;width:138.5px;height:24px;background:#30565f;border-radius:6px;border-right:3px solid #e99c55;box-sizing:border-box;"></div>
<div class="b" style="left:463.5px;top:1385px;width:138.5px;height:24px;background:#2b434b;border-radius:6px;border-right:3px solid #e99c55;box-sizing:border-box;"></div>
<div class="b" style="left:463.5px;top:1413px;width:138.5px;height:24px;background:#3c6b5b;border-radius:6px;border-right:3px solid #e99c55;box-sizing:border-box;"></div>
<div class="b" style="left:463.5px;top:1441px;width:138.5px;height:24px;background:#252525;border-radius:6px;"></div>
<div class="b" style="left:606.0px;top:1077px;width:138.5px;height:24px;background:#2b434b;border-radius:6px;border-left:3px solid #58be8c;box-sizing:border-box;"></div>
<div class="b" style="left:606.0px;top:1105px;width:138.5px;height:24px;background:#30565f;border-radius:6px;border-left:3px solid #58be8c;box-sizing:border-box;"></div>
<div class="b" style="left:606.0px;top:1133px;width:138.5px;height:24px;background:#30565f;border-radius:6px;"></div>
<div class="b" style="left:606.0px;top:1161px;width:138.5px;height:24px;background:#2b434b;border-radius:6px;"></div>
<div class="b" style="left:606.0px;top:1189px;width:138.5px;height:24px;background:#2b434b;border-radius:6px;border-left:3px solid #58be8c;box-sizing:border-box;"></div>
<div class="b" style="left:606.0px;top:1217px;width:138.5px;height:24px;background:#252525;border-radius:6px;border-left:3px solid #58be8c;box-sizing:border-box;"></div>
<div class="b" style="left:606.0px;top:1245px;width:138.5px;height:24px;background:#2b434b;border-radius:6px;border-left:3px solid #58be8c;box-sizing:border-box;"></div>
<div class="b" style="left:606.0px;top:1273px;width:138.5px;height:24px;background:#252525;border-radius:6px;border-left:3px solid #58be8c;box-sizing:border-box;"></div>
<div class="b" style="left:606.0px;top:1301px;width:138.5px;height:24px;background:#30565f;border-radius:6px;"></div>
<div class="b" style="left:606.0px;top:1329px;width:138.5px;height:24px;background:#252525;border-radius:6px;"></div>
<div class="b" style="left:606.0px;top:1357px;width:138.5px;height:24px;background:#4f9c75;border-radius:6px;border-right:3px solid #e99c55;box-sizing:border-box;"></div>
<div class="b" style="left:606.0px;top:1385px;width:138.5px;height:24px;background:#2b434b;border-radius:6px;border-right:3px solid #e99c55;box-sizing:border-box;"></div>
<div class="b" style="left:606.0px;top:1413px;width:138.5px;height:24px;background:#3c6b5b;border-radius:6px;border-right:3px solid #e99c55;box-sizing:border-box;"></div>
<div class="b" style="left:606.0px;top:1441px;width:138.5px;height:24px;background:#2b434b;border-radius:6px;"></div>
<div class="b" style="left:748.5px;top:1077px;width:138.5px;height:24px;background:#437f63;border-radius:6px;border-left:3px solid #58be8c;box-sizing:border-box;"></div>
<div class="b" style="left:748.5px;top:1105px;width:138.5px;height:24px;background:#252525;border-radius:6px;border-left:3px solid #58be8c;box-sizing:border-box;"></div>
<div class="b" style="left:748.5px;top:1133px;width:138.5px;height:24px;background:#30565f;border-radius:6px;"></div>
<div class="b" style="left:748.5px;top:1161px;width:138.5px;height:24px;background:#2b434b;border-radius:6px;"></div>
<div class="b" style="left:748.5px;top:1189px;width:138.5px;height:24px;background:#437f63;border-radius:6px;border-left:3px solid #58be8c;box-sizing:border-box;"></div>
<div class="b" style="left:748.5px;top:1217px;width:138.5px;height:24px;background:#252525;border-radius:6px;border-left:3px solid #58be8c;box-sizing:border-box;"></div>
<div class="b" style="left:748.5px;top:1245px;width:138.5px;height:24px;background:#62b98c;border-radius:6px;"></div>
<div class="b" style="left:748.5px;top:1273px;width:138.5px;height:24px;background:#252525;border-radius:6px;border-left:3px solid #58be8c;box-sizing:border-box;"></div>
<div class="b" style="left:748.5px;top:1301px;width:138.5px;height:24px;background:#437f63;border-radius:6px;"></div>
<div class="b" style="left:748.5px;top:1329px;width:138.5px;height:24px;background:#252525;border-radius:6px;"></div>
<div class="b" style="left:748.5px;top:1357px;width:138.5px;height:24px;background:#437f63;border-radius:6px;border-right:3px solid #e99c55;box-sizing:border-box;"></div>
<div class="b" style="left:748.5px;top:1385px;width:138.5px;height:24px;background:#30565f;border-radius:6px;border-right:3px solid #e99c55;box-sizing:border-box;"></div>
<div class="b" style="left:748.5px;top:1413px;width:138.5px;height:24px;background:#3c6b5b;border-radius:6px;border-right:3px solid #e99c55;box-sizing:border-box;"></div>
<div class="b" style="left:748.5px;top:1441px;width:138.5px;height:24px;background:#30565f;border-radius:6px;"></div>
<div class="b" style="left:891.0px;top:1077px;width:138.5px;height:24px;background:#69cb98;border-radius:6px;"></div>
<div class="b" style="left:891.0px;top:1105px;width:138.5px;height:24px;background:#252525;border-radius:6px;"></div>
<div class="b" style="left:891.0px;top:1133px;width:138.5px;height:24px;background:#4f9c75;border-radius:6px;"></div>
<div class="b" style="left:891.0px;top:1161px;width:138.5px;height:24px;background:#2b434b;border-radius:6px;"></div>
<div class="b" style="left:891.0px;top:1189px;width:138.5px;height:24px;background:#4f9c75;border-radius:6px;"></div>
<div class="b" style="left:891.0px;top:1217px;width:138.5px;height:24px;background:#252525;border-radius:6px;"></div>
<div class="b" style="left:891.0px;top:1245px;width:138.5px;height:24px;background:#62b98c;border-radius:6px;"></div>
<div class="b" style="left:891.0px;top:1273px;width:138.5px;height:24px;background:#252525;border-radius:6px;"></div>
<div class="b" style="left:891.0px;top:1301px;width:138.5px;height:24px;background:#4f9c75;border-radius:6px;"></div>
<div class="b" style="left:891.0px;top:1329px;width:138.5px;height:24px;background:#2b434b;border-radius:6px;"></div>
<div class="b" style="left:891.0px;top:1357px;width:138.5px;height:24px;background:#62b98c;border-radius:6px;border-right:3px solid #e99c55;box-sizing:border-box;"></div>
<div class="b" style="left:891.0px;top:1385px;width:138.5px;height:24px;background:#2b434b;border-radius:6px;border-right:3px solid #e99c55;box-sizing:border-box;"></div>
<div class="b" style="left:891.0px;top:1413px;width:138.5px;height:24px;background:#62b98c;border-radius:6px;border-right:3px solid #e99c55;box-sizing:border-box;"></div>
<div class="b" style="left:891.0px;top:1441px;width:138.5px;height:24px;background:#2b434b;border-radius:6px;"></div>
<div class="b" style="left:1033.5px;top:1077px;width:138.5px;height:24px;background:#4f9c75;border-radius:6px;"></div>
<div class="b" style="left:1033.5px;top:1105px;width:138.5px;height:24px;background:#2b434b;border-radius:6px;"></div>
<div class="b" style="left:1033.5px;top:1133px;width:138.5px;height:24px;background:#62b98c;border-radius:6px;"></div>
<div class="b" style="left:1033.5px;top:1161px;width:138.5px;height:24px;background:#2b434b;border-radius:6px;"></div>
<div class="b" style="left:1033.5px;top:1189px;width:138.5px;height:24px;background:#4f9c75;border-radius:6px;"></div>
<div class="b" style="left:1033.5px;top:1217px;width:138.5px;height:24px;background:#2b434b;border-radius:6px;"></div>
<div class="b" style="left:1033.5px;top:1245px;width:138.5px;height:24px;background:#437f63;border-radius:6px;"></div>
<div class="b" style="left:1033.5px;top:1273px;width:138.5px;height:24px;background:#30565f;border-radius:6px;"></div>
<div class="b" style="left:1033.5px;top:1301px;width:138.5px;height:24px;background:#437f63;border-radius:6px;"></div>
<div class="b" style="left:1033.5px;top:1329px;width:138.5px;height:24px;background:#30565f;border-radius:6px;"></div>
<div class="b" style="left:1033.5px;top:1357px;width:138.5px;height:24px;background:#437f63;border-radius:6px;border-right:3px solid #e99c55;box-sizing:border-box;"></div>
<div class="b" style="left:1033.5px;top:1385px;width:138.5px;height:24px;background:#30565f;border-radius:6px;border-right:3px solid #e99c55;box-sizing:border-box;"></div>
<div class="b" style="left:1033.5px;top:1413px;width:138.5px;height:24px;background:#4f9c75;border-radius:6px;border-right:3px solid #e99c55;box-sizing:border-box;"></div>
<div class="b" style="left:1033.5px;top:1441px;width:138.5px;height:24px;background:#30565f;border-radius:6px;border-right:3px solid #e99c55;box-sizing:border-box;"></div>
<div class="b" style="left:1176.0px;top:1077px;width:138.5px;height:24px;background:#62b98c;border-radius:6px;"></div>
<div class="b" style="left:1176.0px;top:1105px;width:138.5px;height:24px;background:#252525;border-radius:6px;"></div>
<div class="b" style="left:1176.0px;top:1133px;width:138.5px;height:24px;background:#4f9c75;border-radius:6px;border-right:3px solid #e99c55;box-sizing:border-box;"></div>
<div class="b" style="left:1176.0px;top:1161px;width:138.5px;height:24px;background:#2b434b;border-radius:6px;border-right:3px solid #e99c55;box-sizing:border-box;"></div>
<div class="b" style="left:1176.0px;top:1189px;width:138.5px;height:24px;background:#437f63;border-radius:6px;border-right:3px solid #e99c55;box-sizing:border-box;"></div>
<div class="b" style="left:1176.0px;top:1217px;width:138.5px;height:24px;background:#30565f;border-radius:6px;border-right:3px solid #e99c55;box-sizing:border-box;"></div>
<div class="b" style="left:1176.0px;top:1245px;width:138.5px;height:24px;background:#30565f;border-radius:6px;"></div>
<div class="b" style="left:1176.0px;top:1273px;width:138.5px;height:24px;background:#3c6b5b;border-radius:6px;"></div>
<div class="b" style="left:1176.0px;top:1301px;width:138.5px;height:24px;background:#2b434b;border-radius:6px;"></div>
<div class="b" style="left:1176.0px;top:1329px;width:138.5px;height:24px;background:#2b434b;border-radius:6px;"></div>
<div class="b" style="left:1176.0px;top:1357px;width:138.5px;height:24px;background:#4f9c75;border-radius:6px;border-right:3px solid #e99c55;box-sizing:border-box;"></div>
<div class="b" style="left:1176.0px;top:1385px;width:138.5px;height:24px;background:#30565f;border-radius:6px;border-right:3px solid #e99c55;box-sizing:border-box;"></div>
<div class="b" style="left:1176.0px;top:1413px;width:138.5px;height:24px;background:#4f9c75;border-radius:6px;border-right:3px solid #e99c55;box-sizing:border-box;"></div>
<div class="b" style="left:1176.0px;top:1441px;width:138.5px;height:24px;background:#30565f;border-radius:6px;border-right:3px solid #e99c55;box-sizing:border-box;"></div>
<div class="b" style="left:269px;top:1482px;width:16px;height:13px;background:#2d2d2d;border-radius:4px;border-left:3px solid #58be8c;box-sizing:border-box;"></div>
<div class="t" style="left:291.2px;top:1483.00px;font-size:10.72px;line-height:10.72px;color:#a0a0a0;font-weight:400;letter-spacing:-0.1px;">Oferta</div>
<div class="b" style="left:337px;top:1482px;width:16px;height:13px;background:#2d2d2d;border-radius:4px;border-right:3px solid #e99c55;box-sizing:border-box;"></div>
<div class="t" style="left:359.0px;top:1483.00px;font-size:10.53px;line-height:10.53px;color:#a0a0a0;font-weight:400;letter-spacing:-0.167px;">Recargo</div>
<div class="t" style="left:1139.2px;top:1483.00px;font-size:11px;line-height:11px;color:#a0a0a0;font-weight:400;letter-spacing:-0.225px;">Vacio</div>
<div class="b" style="left:1173px;top:1483px;width:20px;height:12px;background:#262626;border-radius:6px;"></div>
<div class="b" style="left:1195px;top:1483px;width:20px;height:12px;background:#2c444b;border-radius:6px;"></div>
<div class="b" style="left:1217px;top:1483px;width:20px;height:12px;background:#33595f;border-radius:6px;"></div>
<div class="b" style="left:1239px;top:1483px;width:20px;height:12px;background:#427e63;border-radius:6px;"></div>
<div class="b" style="left:1261px;top:1483px;width:20px;height:12px;background:#5fb78b;border-radius:6px;"></div>
<div class="t" style="left:1289.4px;top:1483.00px;font-size:10.6px;line-height:10.6px;color:#a0a0a0;font-weight:400;letter-spacing:-0.162px;">Lleno</div>
</body></html>
